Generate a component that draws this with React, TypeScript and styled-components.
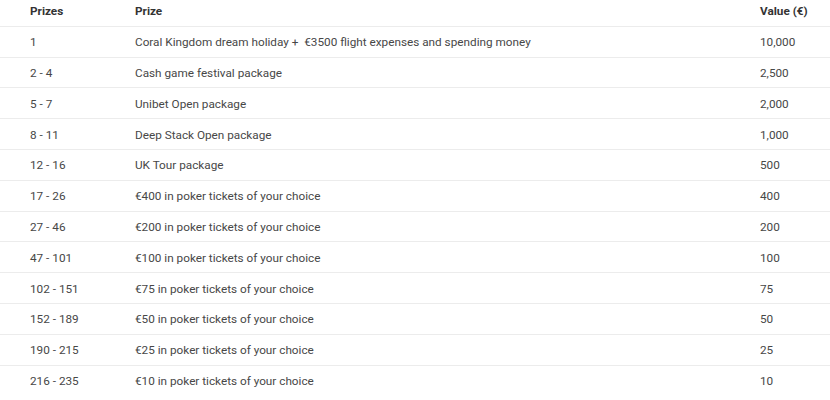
import React from "react";
import styled, { createGlobalStyle } from "styled-components";

const Global = createGlobalStyle`
  html, body { margin: 0; padding: 0; background: #fff; }
  body { font-family: Roboto, "Liberation Sans", Arial, sans-serif; }
`;

const Table = styled.div`
  width: 830px;
  margin-top: -4px;
`;

const Row = styled.div<{ $head?: boolean; $last?: boolean }>`
  display: grid;
  grid-template-columns: 105px 625px 1fr;
  align-items: center;
  box-sizing: border-box;
  height: 30.8px;
  padding-left: 30px;
  padding-top: 1px;
  border-bottom: ${(p) => (p.$last ? "none" : "1px solid #ececec")};
  font-size: 11.75px;
  color: ${(p) => (p.$head ? "#333" : "#474747")};
  font-weight: ${(p) => (p.$head ? 700 : 400)};
`;

const Cell = styled.div`
  white-space: pre;
`;

const rows: [string, string, string][] = [
  ["1", "Coral Kingdom dream holiday +  €3500 flight expenses and spending money", "10,000"],
  ["2 - 4", "Cash game festival package", "2,500"],
  ["5 - 7", "Unibet Open package", "2,000"],
  ["8 - 11", "Deep Stack Open package", "1,000"],
  ["12 - 16", "UK Tour package", "500"],
  ["17 - 26", "€400 in poker tickets of your choice", "400"],
  ["27 - 46", "€200 in poker tickets of your choice", "200"],
  ["47 - 101", "€100 in poker tickets of your choice", "100"],
  ["102 - 151", "€75 in poker tickets of your choice", "75"],
  ["152 - 189", "€50 in poker tickets of your choice", "50"],
  ["190 - 215", "€25 in poker tickets of your choice", "25"],
  ["216 - 235", "€10 in poker tickets of your choice", "10"],
];

export default function App() {
  return (
    <>
      <Global />
      <Table>
        <Row $head>
          <Cell>Prizes</Cell>
          <Cell>Prize</Cell>
          <Cell>Value (€)</Cell>
        </Row>
        {rows.map((r, i) => (
          <Row key={i} $last={i === rows.length - 1}>
            <Cell>{r[0]}</Cell>
            <Cell>{r[1]}</Cell>
            <Cell>{r[2]}</Cell>
          </Row>
        ))}
      </Table>
    </>
  );
}
